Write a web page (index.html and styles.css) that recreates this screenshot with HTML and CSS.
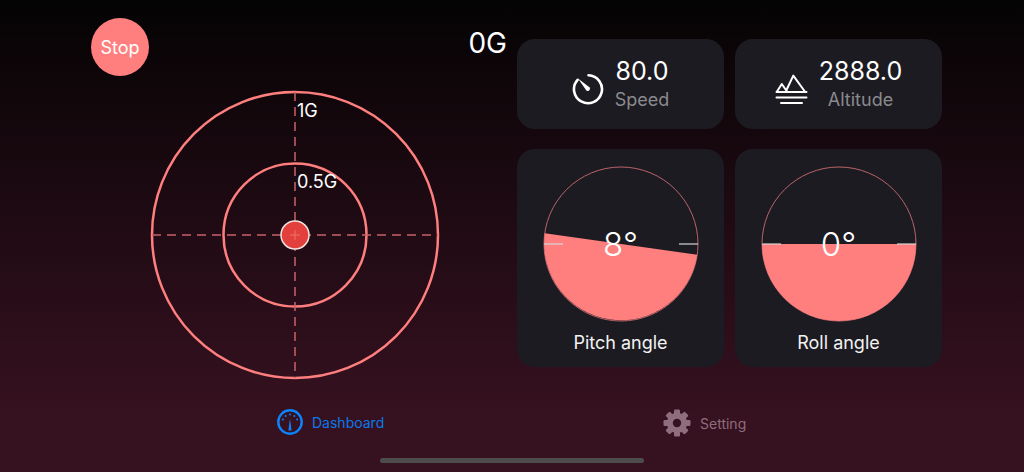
FILE: index.html
```html
<!DOCTYPE html>
<html lang="en">
<head>
  <meta charset="UTF-8" />
  <meta name="viewport" content="width=device-width, initial-scale=1.0"/>
  <title>G Meter</title>
  <link rel="stylesheet" href="styles.css">
</head>
<body>
  <div class="main">

    <!-- G meter -->
    <div class="left">
      <div class="left-top">
        <button class="stop" type="button">Stop</button>
        <div class="g-value">0G</div>
      </div>
      <svg class="meter" width="292" height="292" viewBox="0 0 292 292">
        <circle class="ring" cx="145" cy="145" r="143"/>
        <circle class="ring" cx="145" cy="145" r="71.5"/>
        <line class="axis" x1="145" y1="2" x2="145" y2="288"/>
        <line class="axis" x1="2" y1="145" x2="288" y2="145"/>
        <text class="meter-label" x="147" y="27">1G</text>
        <text class="meter-label" x="147" y="98">0.5G</text>
        <circle class="dot" cx="145" cy="145" r="14"/>
        <line class="dot-cross" x1="145" y1="140" x2="145" y2="150"/>
        <line class="dot-cross" x1="140" y1="145" x2="150" y2="145"/>
      </svg>
    </div>

    <!-- Cards -->
    <div class="right">
      <div class="card-row">
        <div class="card stat">
          <svg class="stat-icon" width="32" height="32" viewBox="0 0 32 32">
            <path class="line-icon" d="M16.5 2.2A14 14 0 1 1 5.6 6.8"/>
            <path class="fill-icon" d="M6 5.5L17.4 14.2A2.2 2.2 0 0 1 14.4 17.4Z"/>
          </svg>
          <div class="stat-text">
            <div class="stat-value">80.0</div>
            <div class="stat-name">Speed</div>
          </div>
        </div>
        <div class="card stat">
          <svg class="stat-icon" width="33" height="32" viewBox="0 0 33 32">
            <path class="line-icon thin" d="M11.5 17L18.3 2.6L29.5 18M2 18.5L6.8 11L12 18.5"/>
            <path class="line-icon thin" d="M1.5 19H31.5M1.5 24.5H31.5M6 30H27"/>
          </svg>
          <div class="stat-text">
            <div class="stat-value">2888.0</div>
            <div class="stat-name">Altitude</div>
          </div>
        </div>
      </div>
      <div class="card-row">
        <div class="card angle">
          <div class="dial">
            <svg width="156" height="156" viewBox="-78 -78 156 156">
              <circle class="dial-edge" r="77"/>
              <path class="dial-fill" d="M-76.25 -10.7A77 77 0 0 0 76.25 10.7Z"/>
              <line class="dial-tick" x1="-77" y1="0" x2="-58" y2="0"/>
              <line class="dial-tick" x1="58" y1="0" x2="77" y2="0"/>
            </svg>
            <div class="dial-value">8°</div>
          </div>
          <div class="angle-name">Pitch angle</div>
        </div>
        <div class="card angle">
          <div class="dial">
            <svg width="156" height="156" viewBox="-78 -78 156 156">
              <circle class="dial-edge" r="77"/>
              <path class="dial-fill" d="M-77 0A77 77 0 0 0 77 0Z"/>
              <line class="dial-tick" x1="-77" y1="0" x2="-58" y2="0"/>
              <line class="dial-tick" x1="58" y1="0" x2="77" y2="0"/>
            </svg>
            <div class="dial-value">0°</div>
          </div>
          <div class="angle-name">Roll angle</div>
        </div>
      </div>
    </div>
  </div>

  <!-- Tab bar -->
  <div class="tabs">
    <div class="tab active">
      <svg width="26" height="26" viewBox="0 0 26 26">
        <circle class="tab-ring" cx="13" cy="13" r="11.7"/>
        <path class="tab-needle" d="M13 9.5L14.6 21.5H11.4Z"/>
        <circle class="tab-tick" cx="13" cy="5.5" r="1"/>
        <circle class="tab-tick" cx="8.6" cy="7" r="1"/>
        <circle class="tab-tick" cx="17.4" cy="7" r="1"/>
        <circle class="tab-tick" cx="5.8" cy="10.6" r="1"/>
        <circle class="tab-tick" cx="20.2" cy="10.6" r="1"/>
      </svg>
      <span>Dashboard</span>
    </div>
    <div class="tab">
      <svg width="28" height="28" viewBox="-14 -14 28 28">
        <circle class="gear-ring" r="7.2"/>
        <rect class="gear-tooth" x="-3" y="-13.5" width="6" height="5" rx="1.2"/>
        <rect class="gear-tooth" x="-3" y="-13.5" width="6" height="5" rx="1.2" transform="rotate(45)"/>
        <rect class="gear-tooth" x="-3" y="-13.5" width="6" height="5" rx="1.2" transform="rotate(90)"/>
        <rect class="gear-tooth" x="-3" y="-13.5" width="6" height="5" rx="1.2" transform="rotate(135)"/>
        <rect class="gear-tooth" x="-3" y="-13.5" width="6" height="5" rx="1.2" transform="rotate(180)"/>
        <rect class="gear-tooth" x="-3" y="-13.5" width="6" height="5" rx="1.2" transform="rotate(225)"/>
        <rect class="gear-tooth" x="-3" y="-13.5" width="6" height="5" rx="1.2" transform="rotate(270)"/>
        <rect class="gear-tooth" x="-3" y="-13.5" width="6" height="5" rx="1.2" transform="rotate(315)"/>
      </svg>
      <span>Setting</span>
    </div>
  </div>

  <div class="home-bar"></div>
</body>
</html>
```

FILE: styles.css
```css
body {
  margin: 0;
  width: 1024px;
  height: 472px;
  overflow: hidden;
  background: linear-gradient(to bottom, #040404 0%, #0c0508 12%, #361120 88%, #361120 100%);
  font-family: Inter, "Liberation Sans", sans-serif;
  color: white;
}

.main {
  display: flex;
  height: 385px;
  padding: 18px 0 0 91px;
  box-sizing: border-box;
}

/* left side */
.left {
  width: 426px;
}

.left-top {
  display: flex;
  justify-content: space-between;
  padding-right: 10px;
}

.stop {
  width: 58px;
  height: 58px;
  border: none;
  border-radius: 50%;
  padding: 0;
  background-color: #ff7f7f;
  color: white;
  font-family: inherit;
  font-size: 18px;
}

.g-value {
  font-size: 28px;
  line-height: 34px;
  margin-top: 8px;
}

.meter {
  display: block;
  margin: 14px 0 0 59px;
}

.ring {
  fill: none;
  stroke: #ff7f7f;
  stroke-width: 2.5;
}

.axis {
  stroke: #c9626c;
  stroke-width: 1.5;
  stroke-dasharray: 9 6;
}

.meter-label {
  fill: white;
  font-size: 18px;
}

.dot {
  fill: #e2403c;
  stroke: #f3e3e0;
  stroke-width: 1.5;
}

.dot-cross {
  stroke: #f0706a;
  stroke-width: 1;
}

/* right side */
.right {
  display: flex;
  flex-direction: column;
  gap: 20px;
  padding-top: 21px;
}

.card-row {
  display: flex;
  gap: 11px;
}

.card {
  width: 207px;
  background-color: #1c1b21;
  border-radius: 18px;
}

.stat {
  height: 90px;
  display: flex;
  align-items: center;
  justify-content: center;
  gap: 11px;
}

.stat-icon {
  margin-top: 10px;
}

.stat-text {
  text-align: center;
}

.stat-value {
  font-size: 25px;
  line-height: 32px;
}

.stat-name {
  font-size: 18px;
  line-height: 26px;
  color: #8a8a8e;
}

.line-icon {
  fill: none;
  stroke: white;
  stroke-width: 2.6;
  stroke-linecap: round;
  stroke-linejoin: round;
}

.line-icon.thin {
  stroke-width: 2;
}

.fill-icon {
  fill: white;
}

.angle {
  height: 218px;
  display: flex;
  flex-direction: column;
  align-items: center;
  padding-top: 17px;
  box-sizing: border-box;
}

.dial {
  position: relative;
  width: 156px;
  height: 156px;
}

.dial svg {
  display: block;
}

.dial-edge {
  fill: none;
  stroke: #b9636a;
  stroke-width: 1;
}

.dial-fill {
  fill: #ff7f7f;
}

.dial-tick {
  stroke: #d8d4d4;
  stroke-width: 1.2;
}

.dial-value {
  position: absolute;
  left: 0;
  right: 0;
  top: 54px;
  text-align: center;
  font-size: 33px;
  line-height: 48px;
  font-weight: 300;
}

.angle-name {
  margin-top: 8px;
  font-size: 18px;
  line-height: 26px;
  color: #f2f2f2;
}

/* tab bar */
.tabs {
  display: flex;
  height: 74px;
  padding: 0 0 0 277px;
  box-sizing: border-box;
  align-items: flex-start;
  gap: 278px;
  padding-top: 24px;
}

.tab {
  display: flex;
  align-items: center;
  gap: 9px;
  width: 108px;
  font-size: 14px;
  color: #8e6d7d;
}

.tab.active {
  color: #0a7aea;
}

.tab-ring {
  fill: none;
  stroke: #0a84ff;
  stroke-width: 2.4;
}

.tab-needle,
.tab-tick {
  fill: #0a84ff;
}

.gear-ring {
  fill: none;
  stroke: #8e6d7d;
  stroke-width: 6;
}

.gear-tooth {
  fill: #8e6d7d;
}

.home-bar {
  width: 264px;
  height: 5px;
  margin: -1px auto 0;
  border-radius: 3px;
  background-color: #4e4b4c;
}
```
